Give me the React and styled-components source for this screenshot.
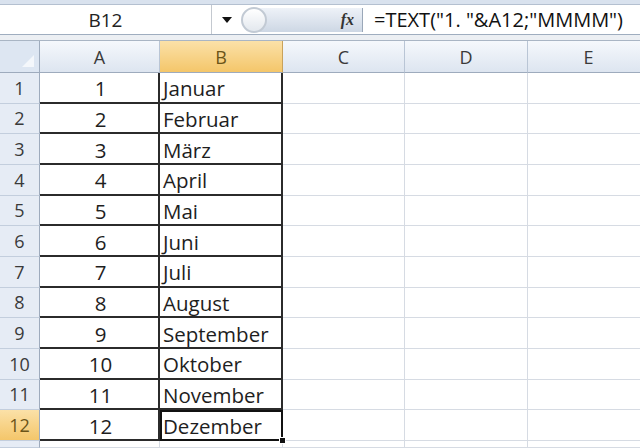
import React from 'react'
import styled, { createGlobalStyle } from 'styled-components'

const GlobalStyle = createGlobalStyle`
	html, body {
		margin: 0;
		padding: 0;
		background: #ffffff;
		overflow: hidden;
	}
	* {
		box-sizing: border-box;
	}
`

const months = [
	'Januar',
	'Februar',
	'März',
	'April',
	'Mai',
	'Juni',
	'Juli',
	'August',
	'September',
	'Oktober',
	'November',
	'Dezember',
]

const columns = ['A', 'B', 'C', 'D', 'E']
const activeRow = 12

const Window = styled.div`
	width: 640px;
	height: 448px;
	display: flex;
	flex-direction: column;
	font-family: 'Open Sans', 'Liberation Sans', sans-serif;
	color: #222;
	overflow: hidden;
`

const TopStrip = styled.div`
	height: 5px;
	background: #d9e2ee;
	border-bottom: 1px solid #b4c0d0;
`

const FormulaBar = styled.div`
	height: 30px;
	display: flex;
	align-items: stretch;
	background: #ffffff;
	border-bottom: 1px solid #9fadbf;
`

const NameBox = styled.div`
	width: 212px;
	display: flex;
	align-items: center;
	justify-content: center;
	font-size: 19px;
	color: #222;
	border-right: 1px solid #c4c9d0;
`

const Dropdown = styled.div`
	width: 30px;
	display: flex;
	align-items: center;
	justify-content: center;
	&::after {
		content: '';
		border-left: 5px solid transparent;
		border-right: 5px solid transparent;
		border-top: 6px solid #111;
	}
`

const FxGroup = styled.div`
	width: 121px;
	margin: 3px 0 2px 0;
	display: flex;
	align-items: center;
	justify-content: space-between;
	padding: 0 8px 0 0;
	border-radius: 14px 0 0 14px;
	background: linear-gradient(#eef2f8, #cdd7e4);
	border-right: 1px solid #9aa7b8;
`

const RoundButton = styled.div`
	width: 26px;
	height: 26px;
	border-radius: 50%;
	border: 2px solid #c2cad4;
	background: linear-gradient(#ffffff, #e3e8ee);
	margin-left: -1px;
`

const FxLabel = styled.span`
	font-family: 'Liberation Serif', serif;
	font-style: italic;
	font-size: 16px;
	color: #333;
	font-weight: bold;
`

const FormulaText = styled.div`
	flex: 1;
	display: flex;
	align-items: center;
	padding-left: 11px;
	font-size: 20px;
	white-space: nowrap;
	color: #111;
`

const Gap = styled.div`
	height: 6px;
	background: #eceff3;
	border-bottom: 1px solid #a9b5c4;
`

const Grid = styled.div`
	display: grid;
	grid-template-columns: 40px 120px 123px 122px 123px 122px;
	grid-template-rows: 32px repeat(12, 30.67px) 1fr;
	flex: 1;
`

const Corner = styled.div`
	background: #dde6f2;
	border-right: 1px solid #9eabbd;
	border-bottom: 1px solid #9eabbd;
	position: relative;
	&::after {
		content: '';
		position: absolute;
		right: 5px;
		bottom: 5px;
		border-left: 12px solid transparent;
		border-bottom: 12px solid #f4f7fb;
	}
`

const ColHeader = styled.div`
	display: flex;
	align-items: center;
	justify-content: center;
	font-size: 18px;
	color: ${(p) => (p.$selected ? '#6b5418' : '#3a3a3a')};
	background: ${(p) =>
		p.$selected
			? 'linear-gradient(#fbe1a8, #f4c66a)'
			: 'linear-gradient(#f5f8fc, #dde5f0)'};
	border-right: 1px solid ${(p) => (p.$selected ? '#c9a25b' : '#b9c5d5')};
	border-bottom: 1px solid #9eabbd;
`

const RowHeader = styled.div`
	display: flex;
	align-items: center;
	justify-content: center;
	font-size: 18px;
	color: ${(p) => (p.$selected ? '#6b5418' : '#3a3a3a')};
	background: ${(p) =>
		p.$selected ? 'linear-gradient(#fbe1a8, #f4c66a)' : '#e6ecf5'};
	border-right: 1px solid #9eabbd;
	border-bottom: 1px solid #c3cedd;
`

const Cell = styled.div`
	position: relative;
	display: flex;
	align-items: center;
	justify-content: ${(p) => (p.$align === 'center' ? 'center' : 'flex-start')};
	padding-left: 3px;
	padding-top: 2px;
	font-size: 20.5px;
	color: #1e1e1e;
	background: #ffffff;
	white-space: nowrap;
	border-right: ${(p) => (p.$framed ? '2px solid #2b2b2b' : '1px solid #d6dbe3')};
	border-bottom: ${(p) =>
		p.$framed ? '2px solid #2b2b2b' : '1px solid #d6dbe3'};
	outline: ${(p) => (p.$active ? '2px solid #111' : 'none')};
	outline-offset: -2px;
`

const FillHandle = styled.span`
	position: absolute;
	right: -5px;
	bottom: -5px;
	width: 7px;
	height: 7px;
	background: #111;
	border: 1px solid #fff;
	z-index: 2;
`

export default function App() {
	return (
		<>
			<GlobalStyle />
			<Window>
				<TopStrip />
				<FormulaBar>
					<NameBox>B12</NameBox>
					<Dropdown />
					<FxGroup>
						<RoundButton />
						<FxLabel>fx</FxLabel>
					</FxGroup>
					<FormulaText>=TEXT("1. "&amp;A12;"MMMM")</FormulaText>
				</FormulaBar>
				<Gap />
				<Grid>
					<Corner />
					{columns.map((c) => (
						<ColHeader key={c} $selected={c === 'B'}>
							{c}
						</ColHeader>
					))}
					{months.map((m, i) => {
						const row = i + 1
						return (
							<React.Fragment key={m}>
								<RowHeader $selected={row === activeRow}>
									{row}
								</RowHeader>
								<Cell $align='center' $framed>
									{row}
								</Cell>
								<Cell $framed $active={row === activeRow}>
									{m}
									{row === activeRow && <FillHandle />}
								</Cell>
								<Cell />
								<Cell />
								<Cell />
							</React.Fragment>
						)
					})}
					<RowHeader />
					<Cell />
					<Cell />
					<Cell />
					<Cell />
					<Cell />
				</Grid>
			</Window>
		</>
	)
}
